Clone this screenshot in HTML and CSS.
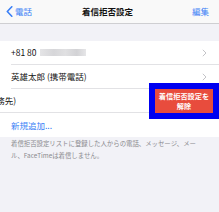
FILE: index.html
```html
<!DOCTYPE html>
<html lang="ja">
<head>
<meta charset="utf-8">
<link rel="stylesheet" href="styles.css">
</head>
<body>
<header class="nav">
  <div class="nav-left">
    <svg class="back" width="7" height="11" viewBox="0 0 7 11"><path d="M5.8 0.8 L1.3 5.5 L5.8 10.2" fill="none" stroke="#3a7ff6" stroke-width="1.6" stroke-linecap="round" stroke-linejoin="round"/></svg>
    <span class="link">電話</span>
  </div>
  <div class="nav-title">着信拒否設定</div>
  <div class="nav-right"><span class="link">編集</span></div>
</header>
<div class="gap"></div>
<ul class="list">
  <li class="row">
    <div class="row-inner">
      <span class="label">+81 80 <span class="blur"></span></span>
      <svg class="chev" width="5" height="8" viewBox="0 0 5 8"><path d="M0.8 0.8 L4 4 L0.8 7.2" fill="none" stroke="#c4c4c8" stroke-width="1"/></svg>
    </div>
  </li>
  <li class="row">
    <div class="row-inner">
      <span class="label">英雄太郎 (携帯電話)</span>
      <svg class="chev" width="5" height="8" viewBox="0 0 5 8"><path d="M0.8 0.8 L4 4 L0.8 7.2" fill="none" stroke="#c4c4c8" stroke-width="1"/></svg>
    </div>
  </li>
  <li class="row row-swiped">
    <div class="row-inner shifted">
      <span class="label">英雄太郎 (勤務先)</span>
      <svg class="chev" width="5" height="8" viewBox="0 0 5 8"><path d="M0.8 0.8 L4 4 L0.8 7.2" fill="none" stroke="#c4c4c8" stroke-width="1"/></svg>
    </div>
  </li>
  <li class="row">
    <div class="row-inner last">
      <span class="label link">新規追加...</span>
    </div>
  </li>
</ul>
<p class="note">着信拒否設定リストに登録した人からの電話、メッセージ、メール、FaceTimeは着信しません。</p>
<div class="unblock"><span>着信拒否設定を<br>解除</span></div>
</body>
</html>
```
FILE: styles.css
```css
* { box-sizing: border-box; }
html, body { margin: 0; padding: 0; }
body {
  width: 219px;
  height: 212px;
  overflow: hidden;
  background: #f2f2f7;
  font-family: "Noto Sans CJK JP", "Noto Sans", sans-serif;
  color: #111;
  position: relative;
}
.nav {
  height: 24px;
  background: #f9f9f9;
  border-bottom: 1px solid #cfcfd2;
  display: grid;
  grid-template-columns: 1fr auto 1fr;
  align-items: center;
  font-size: 8.5px;
  line-height: 1;
  padding: 0 10px 0 6px;
}
.nav-left { display: flex; align-items: center; gap: 2px; }
.back { display: block; }
.nav-title { font-weight: 700; }
.nav-right { text-align: right; }
.link { color: #3a7ff6; }
.gap { height: 17px; }
.list {
  list-style: none;
  margin: 0;
  padding: 0;
  background: #fff;
}
.row {
  height: 24px;
  padding-left: 11px;
  overflow: hidden;
}
.row-inner {
  height: 24px;
  display: flex;
  align-items: center;
  justify-content: space-between;
  padding-right: 12px;
  border-bottom: 1px solid #e2e2e5;
  font-size: 8.5px;
  line-height: 1;
}
.row-inner.last { border-bottom: none; }
.row-swiped { padding-left: 0; }
.shifted { transform: translateX(-62px); padding-left: 11px; width: calc(100% + 62px); }
.label { display: flex; align-items: center; white-space: nowrap; }
.blur {
  display: inline-block;
  width: 46px;
  height: 7px;
  margin-left: 3px;
  background: linear-gradient(90deg, #e4e4e6 0%, #d6d6d9 30%, #e0e0e2 55%, #d2d2d5 80%, #e6e6e8 100%);
  filter: blur(0.6px);
}
.chev { display: block; }
.note {
  margin: 0;
  padding: 1px 12px 0 11px;
  font-size: 6.4px;
  line-height: 12px;
  color: #8a8a8e;
}
.unblock {
  position: absolute;
  left: 149px;
  top: 83px;
  width: 70px;
  height: 36px;
  border: 6px solid #0000f0;
  background: #e84c3d;
  color: #fff;
  font-size: 7.2px;
  line-height: 10px;
  font-weight: 700;
  display: flex;
  align-items: center;
  justify-content: center;
  text-align: center;
}
```
